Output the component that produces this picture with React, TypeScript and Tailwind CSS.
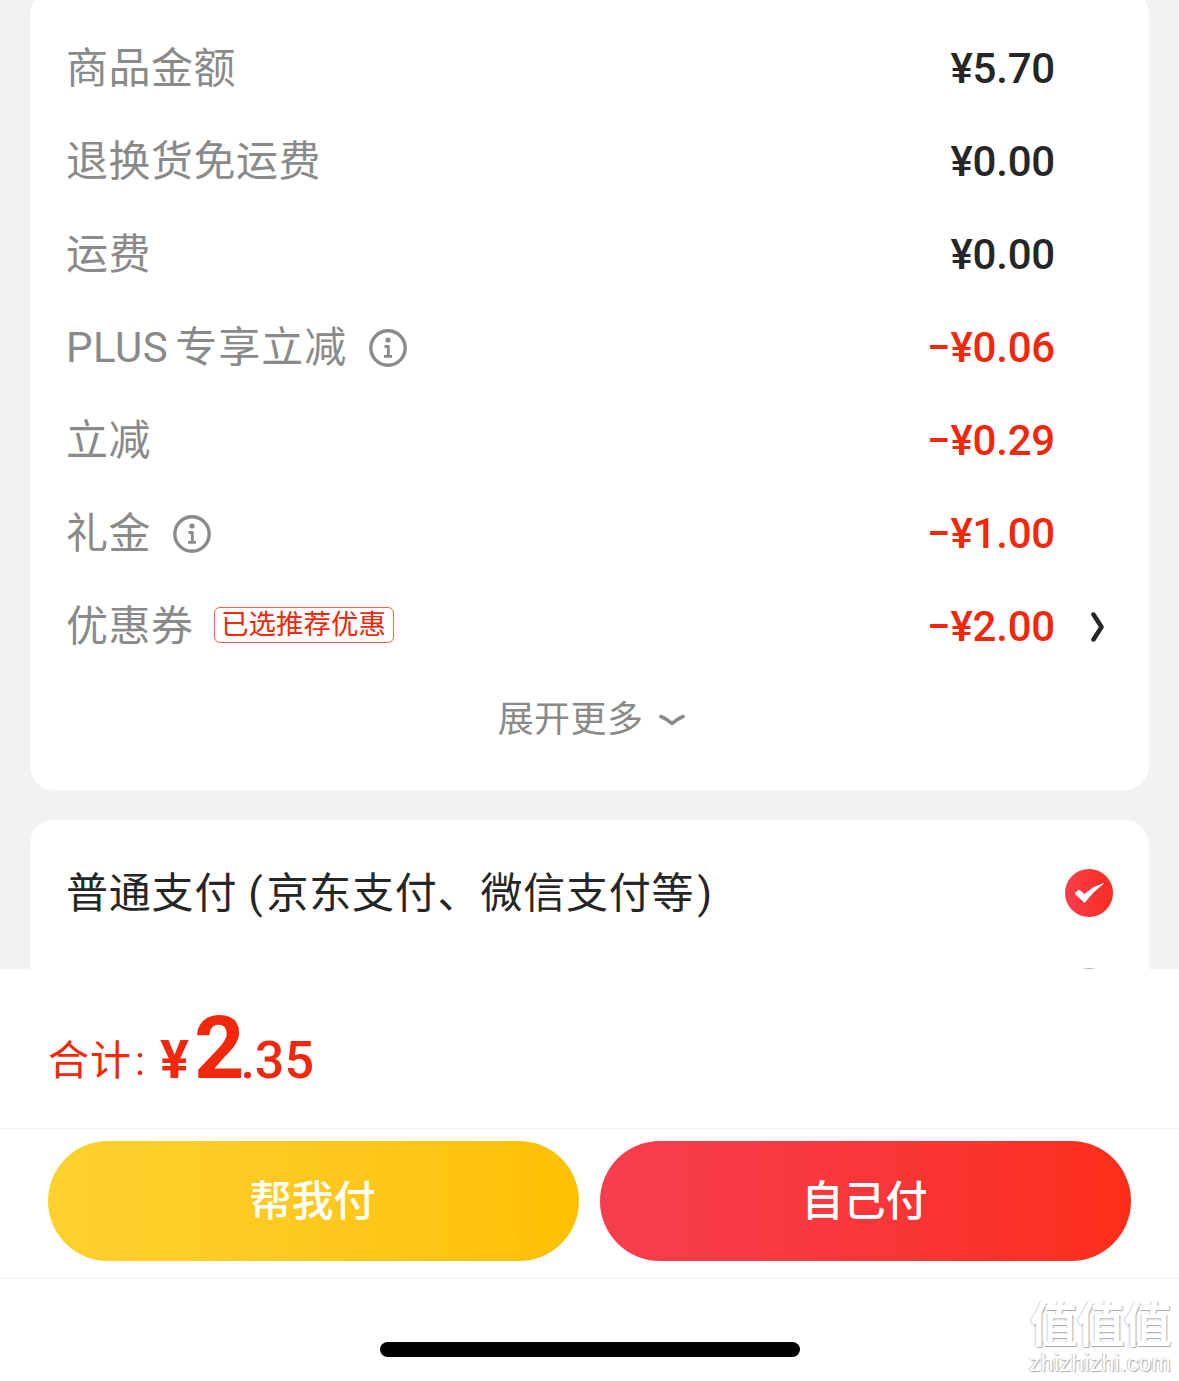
import React from 'react';

const CJK = "font-['Roboto','Noto_Sans_CJK_SC',sans-serif]";

const InfoIcon = () => (
  <svg width="40" height="40" viewBox="0 0 40 40" fill="none" className="shrink-0">
    <circle cx="20" cy="20" r="17.2" stroke="#8a8a8a" strokeWidth="3.4" />
    <circle cx="20" cy="12" r="2.6" fill="#8a8a8a" />
    <path d="M16.500 18.500h3.800v9.500M16 28.400h8" stroke="#8a8a8a" strokeWidth="2.800" strokeLinejoin="round" />
  </svg>
);

const rows = [
  { label: '商品金额', amount: '¥5.70' },
  { label: '退换货免运费', amount: '¥0.00' },
  { label: '运费', amount: '¥0.00' },
  { label: 'PLUS', rest: '专享立减', amount: '−¥0.06', red: true, info: true },
  { label: '立减', amount: '−¥0.29', red: true },
  { label: '礼金', amount: '−¥1.00', red: true, info: true },
  { label: '优惠券', amount: '−¥2.00', red: true, tag: '已选推荐优惠', arrow: true },
];

export default function App() {
  return (
    <div className={`relative flex h-[1381px] w-[1179px] flex-col overflow-hidden bg-white ${CJK}`}>
      {/* Scrolled content, cut off by the bottom sheet */}
      <div className="h-[969px] shrink-0 overflow-hidden bg-[#f2f2f2] px-[30px]">
        <div className="-mt-[10px] rounded-[24px] bg-white pt-[32px] pb-[24px] pl-[36px] pr-[42px]">
          {rows.map((row) => (
            <div key={row.label} className="flex h-[93px] items-center">
              <span className="text-[42px] leading-none tracking-[0.5px] text-[#8a8a8a]">
                {row.label}
                {row.rest && <span className="ml-[7px] tracking-[1px]">{row.rest}</span>}
              </span>
              {row.info && (
                <span className="ml-[21px] flex">
                  <InfoIcon />
                </span>
              )}
              {row.tag && (
                <span className="mb-[4px] ml-[20px] flex h-[36px] w-[180px] items-center justify-center rounded-[6px] border border-[#f4634f] text-[27.500px] leading-none text-[#f2270c]">
                  {row.tag}
                </span>
              )}
              <span
                className={`ml-auto text-[42px] leading-none font-medium tracking-[-0.2px] ${row.red ? 'text-[#f2270c]' : 'text-[#262626]'} ${row.arrow ? 'mr-[33px]' : 'mr-[52px]'}`}
              >
                {row.amount}
              </span>
              {row.arrow && (
                <svg width="19" height="30" viewBox="0 0 19 30" fill="none" className="shrink-0">
                  <path d="M5.500 2.500 13.500 15 5.500 27.500" stroke="#262626" strokeWidth="4.500" strokeLinecap="round" strokeLinejoin="round" />
                </svg>
              )}
            </div>
          ))}
          <div className="flex h-[93px] items-center justify-center gap-[16px] pl-[10px]">
            <span className="text-[36px] leading-none tracking-[0.4px] text-[#8a8a8a]">展开更多</span>
            <svg width="26" height="14" viewBox="0 0 26 14" fill="none">
              <path d="M2 3.500C8 6 10.500 8.500 13 10.500 15.500 8.500 18 6 24 3.500" stroke="#8a8a8a" strokeWidth="3.600" strokeLinecap="round" strokeLinejoin="round" />
            </svg>
          </div>
        </div>

        <div className="mt-[30px] rounded-t-[24px] bg-white pl-[36px] pr-[36px] pt-[49px]">
          <div className="flex h-[48px] items-center justify-between">
            <span className="mt-[2px] text-[42px] leading-none tracking-[0.8px] text-[#262626]">
              普通支付
              <span className="ml-[11px] mr-[3px]">(</span>
              京东支付、微信支付等
              <span className="ml-[3px]">)</span>
            </span>
            <svg width="48" height="48" viewBox="0 0 48 48" className="shrink-0">
              <defs>
                <linearGradient id="chk" x1="0" y1="0" x2="1" y2="0">
                  <stop offset="0" stopColor="#f73d4d" />
                  <stop offset="1" stopColor="#fa2c1e" />
                </linearGradient>
              </defs>
              <circle cx="24" cy="24" r="24" fill="url(#chk)" />
              <path d="M10 24.500 14 21 19.500 25.500Q27 18 38.500 14.500 28 22 19.500 33.500Z" fill="#fff" stroke="#fff" strokeWidth="1" strokeLinejoin="round" />
            </svg>
          </div>
          <div className="mt-[51px] flex justify-end">
            <div className="h-[48px] w-[48px] rounded-full border-2 border-[#b8b8b8]" />
          </div>
        </div>
      </div>

      {/* Total */}
      <div className="flex h-[160px] shrink-0 items-baseline border-b border-[#f2f2f2] pt-[35px] pl-[48px] text-[#f2270c]">
        <span className="-translate-y-[3px] text-[41px] leading-none tracking-[1px]">
          合计<span className="ml-[3px]">:</span>
        </span>
        <span className="ml-[14px] text-[54px] leading-none font-bold">¥</span>
        <span className="ml-[5px] text-[88px] leading-none font-bold tracking-[-3px]">2</span>
        <span className="-ml-[1px] text-[52px] leading-none font-medium">.35</span>
      </div>

      {/* Actions */}
      <div className="flex h-[150px] shrink-0 gap-[21px] border-b border-[#f2f2f2] px-[48px] pt-[12px]">
        <button className="flex h-[120px] w-[531px] items-center justify-center rounded-full bg-gradient-to-r from-[#fdd12e] to-[#ffc000] pr-[2px] text-[42px] font-medium text-white">
          帮我付
        </button>
        <button className="flex h-[120px] w-[531px] items-center justify-center rounded-full bg-gradient-to-r from-[#f63e50] to-[#fd2d17] pr-[2px] text-[42px] font-medium text-white">
          自己付
        </button>
      </div>

      {/* Home indicator */}
      <div className="flex flex-1 justify-center pt-[63px]">
        <div className="h-[15px] w-[420px] rounded-full bg-black" />
      </div>

      {/* Watermark */}
      <div className="absolute right-[8px] bottom-[6px] flex flex-col items-center">
        <span className="text-[48px] leading-[50px] font-bold tracking-[-1px] text-white [text-shadow:1px_1px_1px_#a8a8a8,-1px_0_1px_#d0d0d0]">值值值</span>
        <span className="font-['Liberation_Sans',sans-serif] text-[23px] leading-[24px] tracking-[0.3px] text-white [text-shadow:1px_1px_1px_#a8a8a8,-1px_0_1px_#c8c8c8]">zhizhizhi.com</span>
      </div>
    </div>
  );
}
